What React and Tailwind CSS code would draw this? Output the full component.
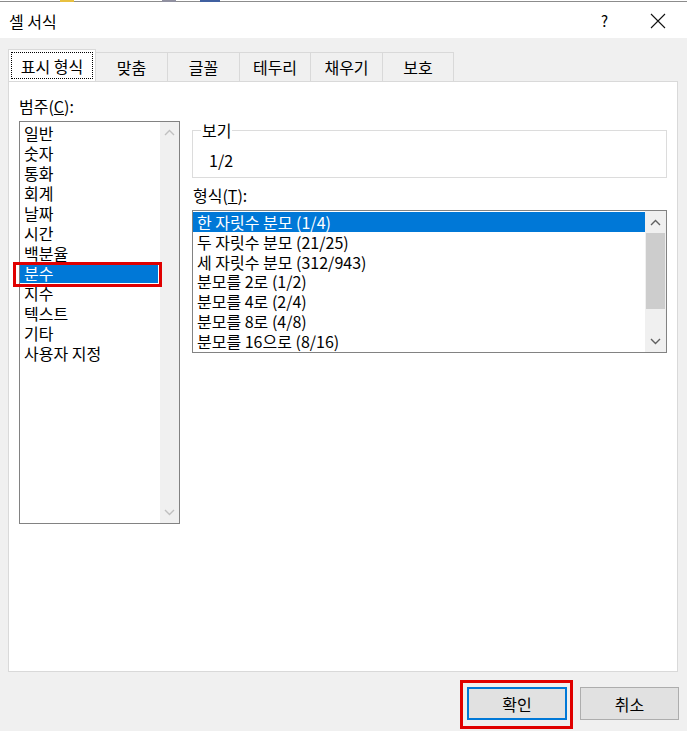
import React from "react";

const font = { fontFamily: '"Noto Sans CJK KR", "Noto Sans", sans-serif' };

function ChevronUp({ color = "#606060" }) {
  return (
    <svg width="11" height="7" viewBox="0 0 11 7" fill="none">
      <path d="M1 6 L5.5 1.5 L10 6" stroke={color} strokeWidth="1.4" />
    </svg>
  );
}
function ChevronDown({ color = "#606060" }) {
  return (
    <svg width="11" height="7" viewBox="0 0 11 7" fill="none">
      <path d="M1 1 L5.5 5.5 L10 1" stroke={color} strokeWidth="1.4" />
    </svg>
  );
}

const categories = ["일반", "숫자", "통화", "회계", "날짜", "시간", "백분율", "분수", "지수", "텍스트", "기타", "사용자 지정"];
const formats = [
  "한 자릿수 분모 (1/4)",
  "두 자릿수 분모 (21/25)",
  "세 자릿수 분모 (312/943)",
  "분모를 2로 (1/2)",
  "분모를 4로 (2/4)",
  "분모를 8로 (4/8)",
  "분모를 16으로 (8/16)",
];
const tabs = [
  { label: "맞춤", w: "w-[72px]" },
  { label: "글꼴", w: "w-[72px]" },
  { label: "테두리", w: "w-[71px]" },
  { label: "채우기", w: "w-[72px]" },
  { label: "보호", w: "w-[71px]" },
];

export default function App() {
  return (
    <div className="w-[687px] h-[731px] bg-[#f0f0f0] flex flex-col overflow-hidden text-black text-[16px]" style={font}>
      {/* top strip */}
      <div className="h-[3px] bg-white flex items-start">
        <div className="w-full h-[2px] border-b border-[#8c8c8c] relative">
          <div className="absolute left-[60px] top-0 w-[14px] h-[2px] bg-[#e8c040]" />
          <div className="absolute left-[162px] top-0 w-[14px] h-[2px] bg-[#9090a0]" />
          <div className="absolute left-[200px] top-0 w-[20px] h-[2px] bg-[#4060a0]" />
        </div>
      </div>
      {/* title bar */}
      <div className="h-[35px] bg-white flex items-center justify-between pl-[9px] pr-[21px]">
        <span className="leading-[20px] mt-[1px]">셀 서식</span>
        <div className="flex items-center gap-[42px]">
          <span className="leading-[20px] text-[15px]">?</span>
          <svg width="16" height="16" viewBox="0 0 16 16">
            <path d="M1 1 L15 15 M15 1 L1 15" stroke="#111" strokeWidth="1.1" />
          </svg>
        </div>
      </div>
      {/* body */}
      <div className="flex flex-col pl-[8px] pt-[11px] pr-[9px]">
        {/* tabs */}
        <div className="flex items-end h-[32px] relative z-10">
          <div className="w-[88px] h-[32px] bg-white border border-[#d9d9d9] border-b-0 p-[2px]">
            <div className="w-full h-full border border-dotted border-black flex items-center justify-center leading-[20px]">
              표시 형식
            </div>
          </div>
          {tabs.map((t) => (
            <div
              key={t.label}
              className={`${t.w} h-[29px] bg-[#f0f0f0] border border-[#d9d9d9] border-l-0 border-b-0 flex items-center justify-center leading-[20px]`}
            >
              {t.label}
            </div>
          ))}
        </div>
        {/* pane */}
        <div className="h-[591px] bg-white border border-[#d9d9d9] flex items-start">
          {/* left column */}
          <div className="flex flex-col pl-[10px] pt-[14px]">
            <div className="leading-[20px] h-[20px] mb-[5px]">
              범주(<span className="underline">C</span>):
            </div>
            <div className="relative w-[161px] h-[403px] border border-[#828282] flex bg-white">
              <div className="flex-1 flex flex-col pt-[1px]">
                {categories.map((c) => (
                  <div
                    key={c}
                    className={`h-[20px] leading-[20px] pl-[4px] mr-[2px] ${c === "분수" ? "bg-[#0078d7] text-white" : ""}`}
                  >
                    {c}
                  </div>
                ))}
              </div>
              <div className="w-[19px] h-full bg-[#f0f0f0] flex flex-col items-center justify-between py-[7px]">
                <ChevronUp color="#c0c0c0" />
                <ChevronDown color="#c0c0c0" />
              </div>
              <div className="absolute left-[-7px] top-[140px] w-[149px] h-[25px] border-[3px] border-[#e00000]" />
            </div>
          </div>
          {/* right column */}
          <div className="flex flex-col ml-[12px] w-[475px]">
            <fieldset className="mt-[38px] border border-[#dcdcdc] h-[58px] pl-[8px] pr-0">
              <legend className="px-[1px] leading-[20px]">보기</legend>
              <div className="pl-[8px] pt-[10px] leading-[20px]">1/2</div>
            </fieldset>
            <div className="leading-[20px] h-[20px] mt-[7px] mb-[5px] pl-[1px]">
              형식(<span className="underline">T</span>):
            </div>
            <div className="w-[475px] h-[143px] border border-[#828282] flex bg-white">
              <div className="flex-1 flex flex-col pt-[1px]">
                {formats.map((f, i) => (
                  <div
                    key={f}
                    className={`h-[19.8px] leading-[20px] pl-[4px] ${i === 0 ? "bg-[#0078d7] text-white" : ""}`}
                  >
                    {f}
                  </div>
                ))}
              </div>
              <div className="w-[21px] h-full bg-[#f0f0f0] flex flex-col items-center">
                <div className="h-[22px] w-full flex items-center justify-center">
                  <ChevronUp />
                </div>
                <div className="h-[76px] w-[19px] bg-[#cdcdcd]" />
                <div className="flex-1" />
                <div className="h-[22px] w-full flex items-center justify-center">
                  <ChevronDown />
                </div>
              </div>
            </div>
          </div>
        </div>
        {/* buttons */}
        <div className="flex justify-end gap-[13px] mt-[15px] mr-[-1px]">
          <div className="relative">
            <div className="w-[100px] h-[33px] bg-[#e1e1e1] border-2 border-[#0078d7] flex items-center justify-center leading-[20px]">
              확인
            </div>
            <div className="absolute left-[-7px] top-[-7px] w-[113px] h-[49px] border-[3px] border-[#e00000]" />
          </div>
          <div className="w-[99px] h-[33px] bg-[#e1e1e1] border border-[#adadad] flex items-center justify-center leading-[20px]">
            취소
          </div>
        </div>
      </div>
    </div>
  );
}
